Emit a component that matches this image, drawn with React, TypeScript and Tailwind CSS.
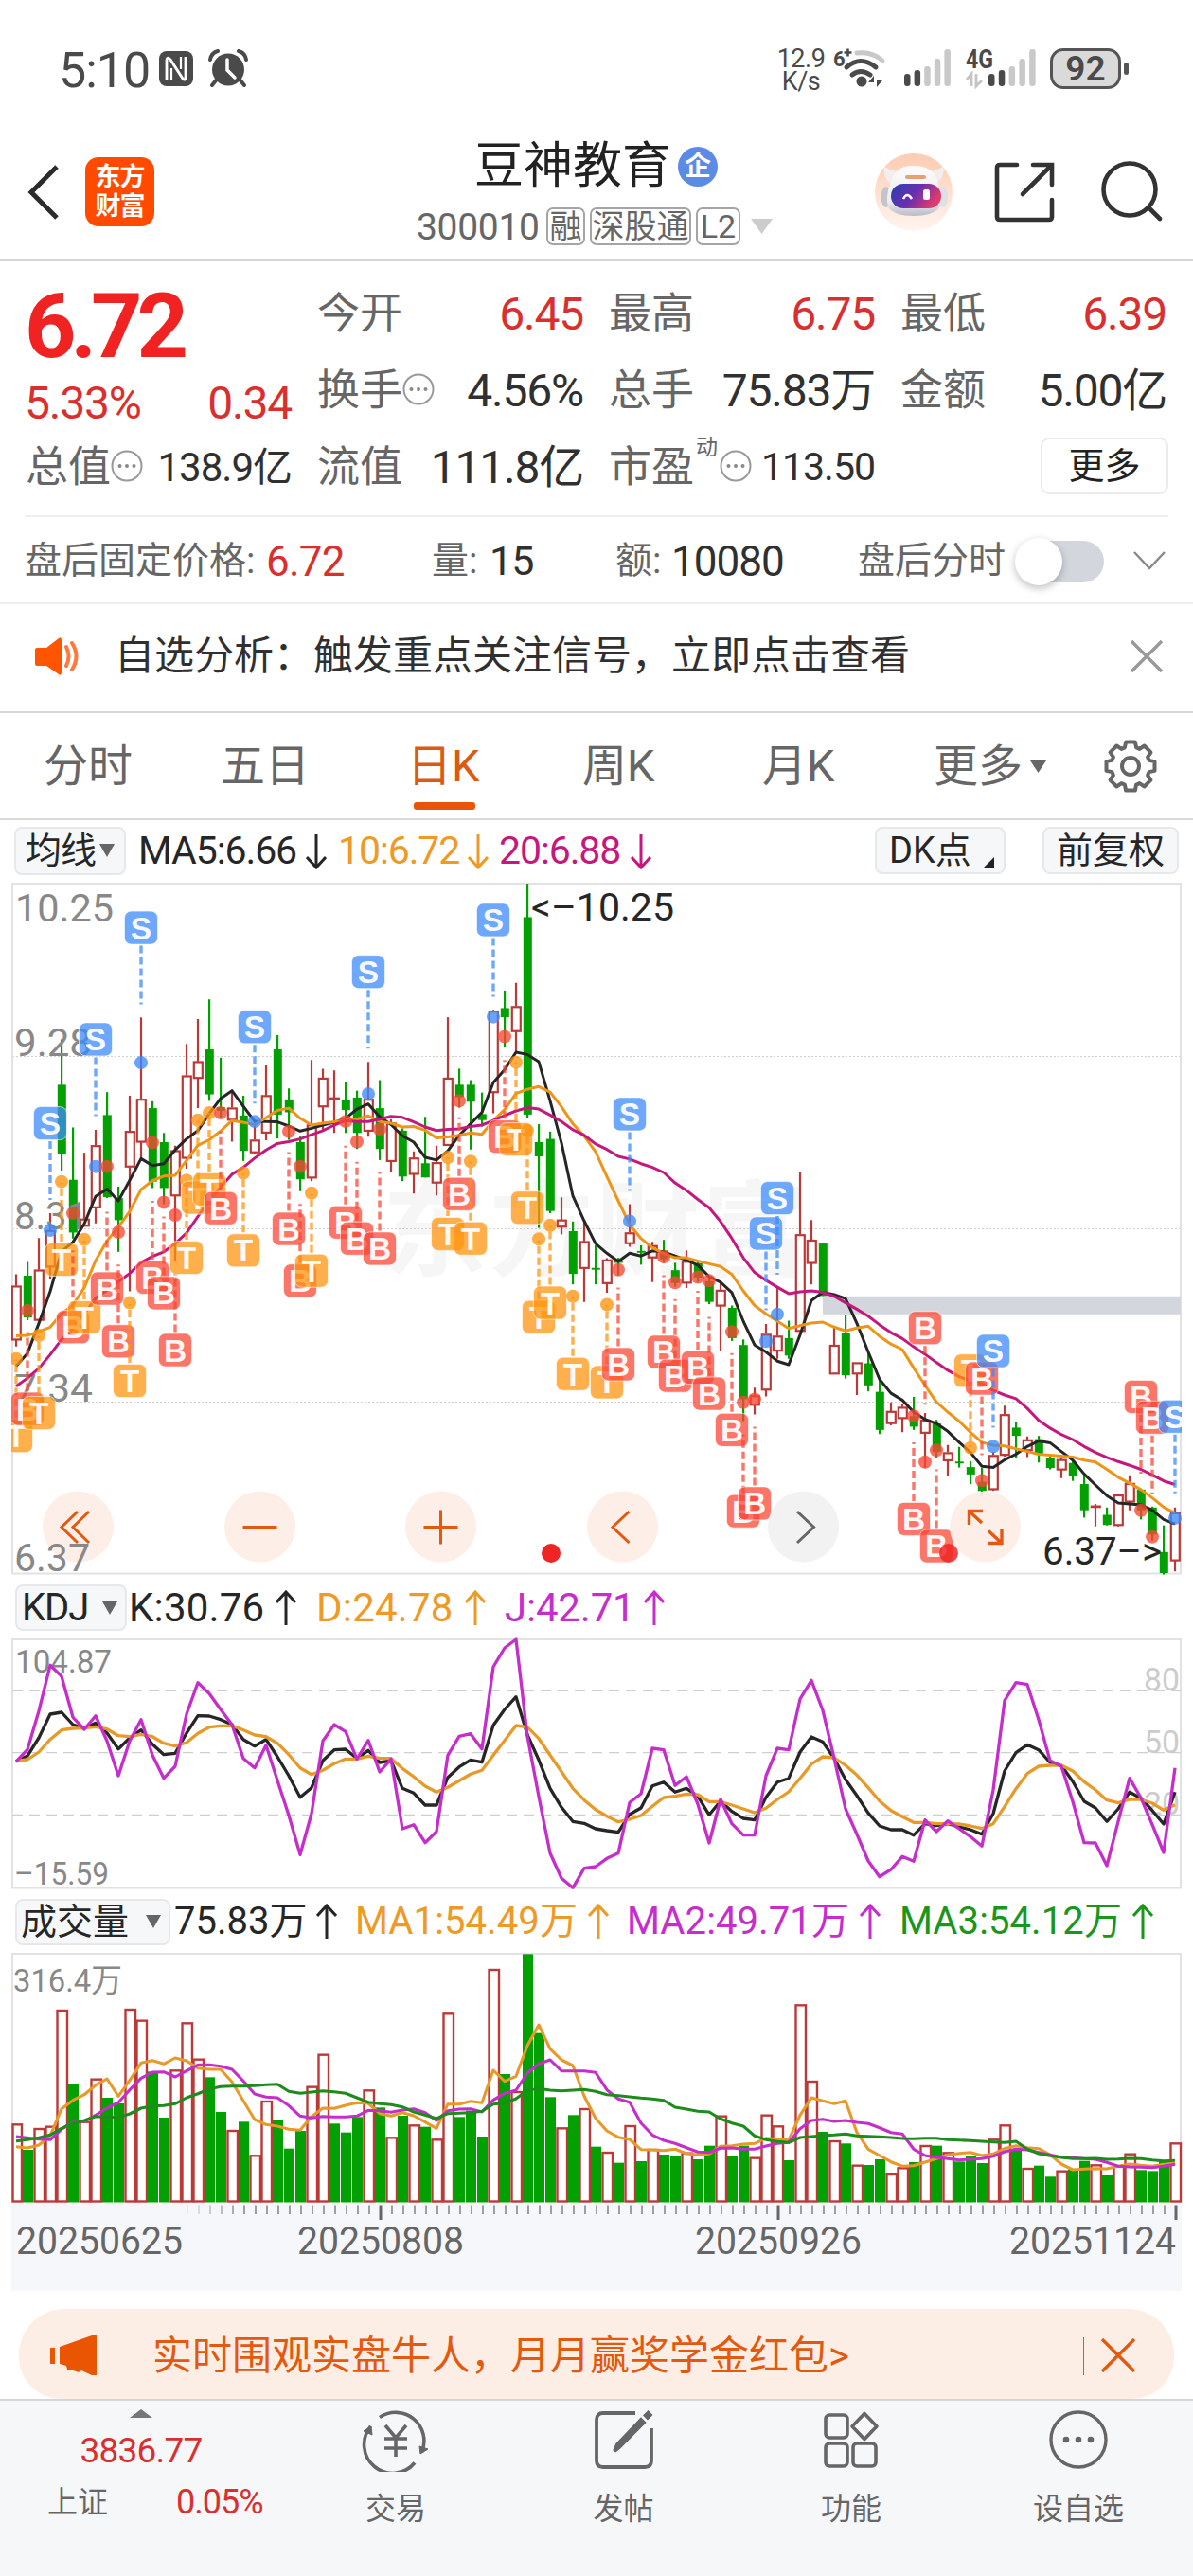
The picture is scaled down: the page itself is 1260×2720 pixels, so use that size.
import React from "react";

const FONT = "font-[Roboto,'Noto_Sans_CJK_SC',sans-serif]";

/* Price panel values: vertical position inside the panel, 2.0632 units per pixel, from y = 920. */
type Candle = [string, number, number, number, number];
const candles: Candle[] = [
  ["R", 878, 903, 1021, 1035], ["G", 851, 881, 972, 978], ["R", 799, 868, 978, 980], ["R", 745, 782, 862, 888],
  ["G", 366, 465, 616, 652], ["G", 558, 672, 787, 800], ["R", 613, 757, 773, 773], ["R", 563, 597, 733, 767],
  ["G", 481, 531, 710, 712], ["G", 687, 712, 760, 829], ["R", 489, 566, 644, 915], ["R", 318, 496, 590, 628],
  ["G", 501, 516, 676, 690], ["G", 570, 590, 690, 725], ["R", 598, 608, 707, 850], ["R", 376, 445, 625, 648],
  ["R", 322, 414, 451, 516], ["G", 279, 388, 486, 500], ["G", 406, 514, 522, 536], ["R", 480, 515, 542, 589],
  ["G", 489, 532, 609, 631], ["R", 545, 585, 613, 615], ["R", 423, 488, 570, 586], ["G", 357, 388, 530, 582],
  ["G", 473, 497, 525, 585], ["G", 578, 590, 671, 697], ["R", 411, 552, 668, 675], ["R", 430, 450, 513, 565],
  ["R", 434, 493, 495, 570], ["G", 458, 497, 520, 570], ["G", 478, 493, 570, 605], ["R", 415, 496, 566, 578],
  ["G", 455, 516, 605, 629], ["R", 540, 548, 632, 655], ["G", 560, 565, 665, 675], ["R", 610, 624, 660, 702],
  ["G", 535, 636, 667, 667], ["R", 598, 634, 679, 706], ["R", 318, 450, 597, 597], ["G", 430, 465, 492, 515],
  ["G", 455, 465, 502, 606], ["G", 482, 529, 542, 556], ["R", 302, 304, 482, 527], ["G", 260, 298, 318, 384],
  ["R", 243, 294, 349, 392], ["G", 27, 100, 530, 538], ["G", 551, 590, 621, 777], ["G", 567, 583, 740, 745],
  ["R", 710, 759, 775, 791], ["G", 763, 784, 877, 900], ["R", 765, 806, 865, 938], ["G", 815, 864, 868, 900],
  ["R", 843, 846, 898, 918], ["G", 842, 849, 853, 880], ["R", 725, 787, 811, 818], ["G", 815, 827, 831, 857],
  ["R", 807, 815, 842, 895], ["G", 803, 826, 845, 853], ["G", 853, 869, 897, 905], ["R", 826, 849, 897, 908],
  ["G", 850, 854, 885, 895], ["G", 880, 893, 938, 943], ["R", 893, 912, 947, 1044], ["G", 946, 951, 1017, 1023],
  ["G", 1020, 1032, 1150, 1198], ["R", 1125, 1142, 1163, 1183], ["R", 986, 1008, 1130, 1144], ["R", 907, 1012, 1045, 1062],
  ["G", 979, 1017, 1055, 1062], ["R", 656, 791, 1002, 1002], ["R", 760, 803, 854, 900], ["G", 811, 811, 925, 925],
  ["R", 990, 1032, 1095, 1095], ["G", 966, 1005, 1098, 1105], ["R", 1070, 1070, 1095, 1141], ["G", 1050, 1072, 1120, 1133],
  ["G", 1105, 1134, 1217, 1226], ["R", 1157, 1176, 1203, 1207], ["R", 1160, 1167, 1192, 1222], ["G", 1145, 1187, 1210, 1217],
  ["R", 1180, 1195, 1224, 1300], ["G", 1195, 1203, 1265, 1277], ["R", 1250, 1266, 1284, 1318], ["G", 1254, 1286, 1290, 1299],
  ["G", 1285, 1298, 1314, 1335], ["G", 1300, 1330, 1350, 1361], ["R", 1265, 1272, 1347, 1350], ["R", 1164, 1183, 1272, 1275],
  ["G", 1200, 1212, 1230, 1277], ["R", 1231, 1238, 1262, 1276], ["G", 1230, 1237, 1271, 1288], ["G", 1270, 1277, 1300, 1303],
  ["R", 1275, 1281, 1304, 1322], ["G", 1284, 1289, 1318, 1328], ["G", 1318, 1335, 1392, 1408], ["R", 1378, 1382, 1384, 1427],
  ["G", 1386, 1402, 1424, 1425], ["R", 1356, 1358, 1425, 1427], ["R", 1316, 1333, 1374, 1392], ["G", 1345, 1347, 1392, 1412],
  ["G", 1384, 1386, 1445, 1458], ["G", 1425, 1483, 1529, 1532], ["R", 1386, 1397, 1502, 1525],
];

const ma5 = [1078,1050,985,915,828,808,768,708,692,718,673,626,641,637,607,583,565,528,495,478,512,545,545,546,555,566,560,553,547,538,518,507,535,552,576,590,623,629,609,575,550,525,460,432,394,399,415,500,592,707,762,811,832,850,832,838,827,829,838,847,858,883,895,918,980,1032,1047,1067,1075,1010,935,917,922,931,985,1047,1107,1137,1152,1178,1194,1203,1220,1244,1266,1296,1299,1282,1270,1253,1241,1245,1264,1283,1313,1337,1360,1376,1378,1380,1392,1412,1422];
const ma10 = [1012,1011,1003,993,964,945,907,848,805,775,741,693,674,664,662,630,597,585,566,543,547,552,537,521,516,538,553,549,546,542,540,533,545,549,557,556,564,581,579,575,570,573,543,519,484,475,469,481,513,550,577,611,665,718,770,800,820,833,842,842,849,855,861,878,914,946,964,980,996,990,984,982,993,1001,995,991,1013,1030,1042,1082,1120,1156,1178,1198,1222,1244,1250,1252,1258,1264,1270,1272,1274,1276,1283,1287,1303,1320,1333,1347,1365,1385,1398];
const ma20 = [1122,1104,1083,1053,1020,998,965,930,912,894,876,852,839,829,811,788,752,717,688,660,645,625,607,593,589,583,574,565,553,543,545,545,540,534,536,546,557,565,562,561,556,553,543,532,522,515,518,531,545,563,575,594,606,621,627,637,645,656,679,695,715,733,763,800,842,874,891,906,920,916,914,917,926,940,954,969,988,1005,1018,1036,1052,1070,1087,1101,1110,1117,1131,1141,1149,1170,1196,1213,1227,1238,1253,1266,1277,1286,1294,1303,1315,1328,1336];

/* Trade signals: kind, candle index, dot position, badge position. */
type Signal = ["S" | "B" | "T", number, number, number];
const signals: Signal[] = [
  ["T", 0, 1062, 1230], ["B", 1, 957, 1171], ["T", 2, 1011, 1180], ["S", 3, 782, 549], ["T", 4, 676, 846],
  ["B", 5, 745, 993], ["T", 6, 802, 972], ["S", 7, 643, 366], ["B", 8, 643, 909], ["B", 9, 786, 1024],
  ["T", 10, 940, 1110], ["S", 11, 417, 123], ["B", 12, 591, 885], ["B", 13, 721, 919], ["B", 14, 749, 1043],
  ["T", 15, 673, 842], ["T", 16, 542, 711], ["T", 17, 526, 693], ["B", 18, 526, 734], ["T", 20, 657, 826],
  ["S", 21, 545, 339], ["B", 24, 567, 779], ["B", 25, 643, 892], ["T", 26, 701, 870], ["B", 29, 545, 765],
  ["B", 30, 589, 800], ["S", 31, 485, 219], ["B", 32, 562, 822], ["T", 38, 623, 790], ["B", 39, 500, 703],
  ["T", 40, 632, 800], ["S", 42, 317, 106], ["B", 43, 360, 578], ["T", 44, 416, 584], ["T", 45, 565, 733],
  ["T", 46, 801, 971], ["T", 47, 771, 940], ["T", 49, 926, 1095], ["T", 52, 944, 1113], ["B", 53, 868, 1074],
  ["S", 54, 762, 529], ["B", 57, 840, 1047], ["B", 58, 896, 1099], ["B", 60, 884, 1081], ["B", 61, 892, 1138],
  ["B", 63, 1003, 1217], ["B", 64, 1157, 1394], ["B", 65, 1150, 1377], ["S", 66, 1024, 789], ["S", 67, 965, 712],
  ["B", 79, 1187, 1411], ["B", 80, 1287, 995], ["B", 81, 1261, 1470], ["T", 84, 1256, 1088], ["B", 85, 1327, 1105],
  ["S", 86, 1253, 1045], ["B", 99, 1392, 1145], ["B", 100, 1450, 1190], ["S", 102, 1409, 1188],
];

/* Oscillator and volume values: 3 units per pixel. */
const kLine = [600,582,525,450,444,483,495,478,510,560,525,500,545,578,574,510,455,456,467,483,530,551,530,585,645,713,683,597,563,561,590,565,603,597,685,700,738,738,650,617,595,602,485,435,395,515,595,685,745,790,796,813,819,824,767,747,677,665,697,685,710,769,725,758,780,785,713,665,653,570,522,538,590,657,708,763,804,816,816,833,797,803,797,807,816,830,765,630,572,547,563,603,613,663,726,747,790,750,697,716,755,798,697];
const dLine = [598,594,570,530,500,495,494,490,497,518,521,514,521,542,551,540,511,491,487,487,500,516,521,542,578,620,641,628,607,592,592,583,590,590,622,648,678,697,682,661,640,628,580,533,486,491,527,580,632,685,722,752,773,791,783,771,742,714,710,703,705,727,727,738,750,762,748,720,696,653,608,585,588,612,643,683,725,755,775,793,793,797,797,798,804,812,797,743,686,638,615,612,612,630,664,690,722,731,720,720,732,754,737];
const jLine = [600,562,440,295,330,460,498,455,535,645,535,467,580,653,615,450,350,385,435,483,590,620,548,660,770,895,765,535,483,505,592,533,633,592,813,800,857,822,580,520,512,560,300,240,213,520,710,890,970,1000,938,933,907,890,730,702,558,563,676,648,735,858,720,797,833,833,645,558,563,402,343,438,590,750,830,915,965,942,901,916,785,822,788,813,838,868,690,407,350,356,467,597,615,727,857,858,930,790,653,715,800,888,620];
const volume = [730,810,744,737,369,600,722,587,645,663,366,401,562,708,559,409,524,580,690,750,721,829,657,714,806,750,611,509,727,755,706,622,676,772,702,733,737,778,379,706,686,768,240,570,627,190,440,643,742,700,681,800,819,851,735,846,810,825,829,821,840,797,704,829,797,836,701,736,843,352,594,753,783,790,860,858,840,888,868,849,798,797,820,847,829,852,778,733,808,870,860,895,878,872,845,859,891,862,824,874,877,846,790];
const vma1 = [800,804,795,765,680,653,635,605,585,640,590,535,527,538,519,528,551,555,555,595,655,714,730,735,745,748,705,678,679,669,661,663,695,703,692,702,722,742,665,665,656,661,558,593,577,480,414,490,525,543,640,710,750,770,777,809,810,812,808,822,826,823,799,797,792,790,773,776,779,700,645,655,664,655,755,808,828,848,862,860,849,838,826,821,818,828,823,806,797,803,806,825,855,873,871,869,870,862,855,859,862,856,853];
const vma2 = [768,772,776,778,745,722,720,700,678,660,620,583,564,563,579,560,541,541,545,555,592,633,643,645,670,703,709,704,706,706,703,685,686,691,684,680,692,717,686,681,680,690,652,631,621,567,538,525,560,560,560,565,620,649,659,725,763,780,790,803,817,818,805,804,808,808,798,790,787,743,717,713,720,717,723,727,740,755,760,808,828,834,838,842,840,838,830,816,808,810,818,826,833,835,838,840,850,862,864,865,866,862,856];
const vma3 = [782,778,772,763,742,725,717,704,706,707,696,678,671,670,664,645,632,617,610,608,608,607,604,602,625,631,627,623,626,631,645,659,664,667,674,690,700,711,695,694,692,688,665,662,648,622,616,621,623,621,619,625,635,638,642,646,649,653,675,681,688,690,712,725,735,766,778,784,787,771,768,765,763,760,766,767,769,771,774,775,773,773,778,779,781,783,785,787,783,808,822,829,834,838,838,837,840,839,837,838,842,845,844];

const RED = "#bb3a38";
const GREEN = "#02a002";
const cx = (i: number) => 17 + 12 * i;
const py = (v: number) => v / 2.0632;
const oy = (v: number) => v / 3;
const points = (values: number[], y: (v: number) => number) =>
  values.map((v, i) => `${cx(i)},${y(v).toFixed(1)}`).join(" ");

const signalColor = { S: "#3c8bfc", B: "#fa4735", T: "#ff940f" };

function Line({ values, y, color, width = 3 }: { values: number[]; y: (v: number) => number; color: string; width?: number }) {
  return <polyline points={points(values, y)} fill="none" stroke={color} strokeWidth={width} strokeLinejoin="round" />;
}

function Label({ x, y, w, size = 41, fill = "#888888", children }: { x: number; y: number; w: number; size?: number; fill?: string; children: string }) {
  return (
    <text x={x} y={y} fontSize={size} fill={fill} textLength={w} lengthAdjust="spacingAndGlyphs">
      {children}
    </text>
  );
}

function PriceChart() {
  return (
    <svg width="1260" height="740" viewBox="0 6 1260 740" className={`block ${FONT}`}>
      <defs>
        <clipPath id="plot"><rect x="12" y="12" width="1236" height="732" /></clipPath>
      </defs>
      <text x="404" y="419" fontSize="110" fontWeight="700" fill="#f6f6f7" textLength="448">东方财富</text>
      <g stroke="#cfcfcf" strokeWidth="1" strokeDasharray="2 2">
        <line x1="13" x2="1247" y1="195.5" y2="195.5" />
        <line x1="13" x2="1247" y1="377.5" y2="377.5" />
        <line x1="13" x2="1247" y1="560.5" y2="560.5" />
      </g>
      <rect x="13" y="13" width="1234" height="728.5" fill="none" stroke="#e2e2e2" strokeWidth="2" />
      <rect x="869" y="448.8" width="378" height="19" fill="#d3d7dd" />
      <g clipPath="url(#plot)">
        {candles.map(([c, hi, top, bot, lo], i) =>
          c === "G" ? (
            <g key={i} fill={GREEN}>
              <rect x={cx(i) - 1} y={py(hi)} width="2.2" height={py(lo - hi)} />
              <rect x={cx(i) - 4.2} y={py(top)} width="9" height={py(bot - top)} />
            </g>
          ) : (
            <g key={i} stroke={RED} strokeWidth="2.2" fill="none">
              <path d={`M${cx(i)} ${py(hi)}V${py(top)}M${cx(i)} ${py(bot)}V${py(lo)}`} />
              <rect x={cx(i) - 4.2} y={py(top) + 0.8} width="9" height={Math.max(py(bot - top) - 1.2, 0.5)} />
            </g>
          ),
        )}
        <Label x={16} y={53} w={104}>10.25</Label>
        <Label x={15} y={195} w={82}>9.28</Label>
        <Label x={15} y={378} w={78}>8.31</Label>
        <Label x={15} y={560} w={83}>7.34</Label>
        <Line values={ma5} y={py} color="#262626" />
        <Line values={ma10} y={py} color="#ee9518" />
        <Line values={ma20} y={py} color="#c4187e" />
        {signals.map(([kind, i, dot, badge]) => {
          const dir = badge > dot ? -1 : 1;
          const by = py(badge);
          const color = signalColor[kind];
          return (
            <g key={kind + i}>
              <line x1={cx(i)} x2={cx(i)} y1={by + dir * 19} y2={by + dir * 81} stroke={color} strokeOpacity="0.75" strokeWidth="3.4" strokeDasharray="8 4" />
              <circle cx={cx(i)} cy={py(dot)} r="7" fill={color} fillOpacity="0.78" />
              <rect x={cx(i) - 17.5} y={by - 17.5} width="35" height="35" rx="7" fill={color} fillOpacity="0.75" stroke="#fff" strokeOpacity="0.6" strokeWidth="1" />
              <text x={cx(i)} y={by + 12} fontSize="33.5" fontWeight="700" fill="#fff" fillOpacity="0.95" textAnchor="middle" className="font-['Liberation_Sans',sans-serif]">{kind}</text>
            </g>
          );
        })}
      </g>
      <circle cx="582" cy="720" r="10" fill="#f02424" />
      <circle cx="1002" cy="720" r="10" fill="#f02424" fillOpacity="0.85" />
      <g fill="#fdeee6" fillOpacity="0.92">
        <circle cx="82.5" cy="692" r="37.5" />
        <circle cx="274.5" cy="692" r="37.5" />
        <circle cx="465.5" cy="692" r="37.5" />
        <circle cx="657.5" cy="692" r="37.5" />
        <circle cx="848.5" cy="692" r="37.5" fill="#f1f1f1" />
        <circle cx="1040.5" cy="692" r="37.5" />
      </g>
      <g stroke="#e05a12" strokeWidth="3" fill="none">
        <path d="M82 676L65 692.500L82 709M94 676L77 692.500L94 709" />
        <path d="M256.500 692.500H292.500" />
        <path d="M447.500 692.500H483.500M465.500 674.500V710.500" />
        <path d="M664.500 676L647 692.500L664.500 709" />
        <path d="M842 676L859.500 692.500L842 709" stroke="#666" />
        <path d="M1023.500 690V675.500H1038M1024 676L1037 688M1058 695V709.500H1043M1057.500 709L1044 696.500" strokeWidth="3.4" />
      </g>
      <Label x={15} y={739} w={80}>6.37</Label>
      <Label x={561} y={52} w={151} fill="#262626">{"<–10.25"}</Label>
      <Label x={1101} y={732} w={126} fill="#262626">{"6.37–>"}</Label>
    </svg>
  );
}

function KdjChart() {
  return (
    <svg width="1260" height="268" viewBox="0 69 1260 268" className={`block ${FONT}`}>
      <rect x="13" y="71" width="1234" height="262.500" fill="none" stroke="#e2e2e2" strokeWidth="2" />
      <g stroke="#cfcfcf" strokeWidth="1.200" strokeDasharray="11 7">
        <line x1="13" x2="1247" y1="125.300" y2="125.300" />
        <line x1="13" x2="1247" y1="190.700" y2="190.700" />
        <line x1="13" x2="1247" y1="256.400" y2="256.400" />
      </g>
      <Label x={16} y={106} w={102} size={34}>104.87</Label>
      <Label x={15} y={330} w={100} size={34}>–15.59</Label>
      <Label x={1208} y={125} w={38} size={34} fill="#cccccc">80</Label>
      <Label x={1208} y={191} w={38} size={34} fill="#cccccc">50</Label>
      <Label x={1208} y={256} w={38} size={34} fill="#cccccc">20</Label>
      <Line values={kLine} y={oy} color="#262626" width={3.3} />
      <Line values={dLine} y={oy} color="#e89a28" width={3.3} />
      <Line values={jLine} y={oy} color="#c62ecb" width={3.3} />
    </svg>
  );
}

function VolumeChart() {
  return (
    <svg width="1260" height="362" viewBox="0 61 1260 362" className={`block ${FONT}`}>
      <rect x="12" y="327" width="1236" height="92" fill="#f6f7fa" />
      <path d="M13 325V63H1247V325" fill="none" stroke="#e2e2e2" strokeWidth="2" />
      <Label x={14} y={103} w={115} size={34}>316.4万</Label>
      {volume.map((v, i) => {
        const green = (candles[i][0] === "G" && i !== 4) || i === 28;
        const top = oy(v);
        const left = i === 0 ? 13 : cx(i) - 5;
        return green ? (
          <rect key={i} x={cx(i) - 5} y={top} width="11" height={325.5 - top} fill={GREEN} />
        ) : (
          <rect key={i} x={left + 0.5} y={top} width={cx(i) + 6 - left - 0.5} height={324.500 - top} fill="#fff" stroke={RED} strokeWidth="2.400" />
        );
      })}
      <Line values={vma1} y={oy} color="#e89a28" width={3.1} />
      <Line values={vma2} y={oy} color="#c62ecb" width={3.1} />
      <Line values={vma3} y={oy} color="#1d8c1d" width={3.1} />
      {volume.map((_, i) => {
        if (i < 15) return null;
        const major = i === 32 || i === 67 || i === 102;
        return (
          <line key={i} x1={cx(i) + 1} x2={cx(i) + 1} y1="328.500" y2={major ? 344 : 338} stroke={major ? "#666" : "#888"} strokeWidth={major ? 3 : 1.600} strokeOpacity={Math.min(1, (i - 14) / 6)} />
        );
      })}
      <Label x={17} y={380} w={176} size={40} fill="#666">20250625</Label>
      <Label x={314} y={380} w={176} size={40} fill="#666">20250808</Label>
      <Label x={734} y={380} w={176} size={40} fill="#666">20250926</Label>
      <Label x={1066} y={380} w={176} size={40} fill="#666">20251124</Label>
    </svg>
  );
}

function Down({ className = "", w = 16, h = 14 }: { className?: string; w?: number; h?: number }) {
  return (
    <svg width={w} height={h} viewBox="0 0 16 14" preserveAspectRatio="none" fill="currentColor" className={`shrink-0 ${className}`}>
      <path d="M0 0H16L8 14Z" />
    </svg>
  );
}

function Arrow({ up = false, className = "" }: { up?: boolean; className?: string }) {
  return (
    <svg width="22" height="38" viewBox="0 0 22 38" fill="none" stroke="currentColor" strokeWidth="3" className={`shrink-0 ${className}`}>
      <path d={up ? "M11 37V2M1 13L11 2L21 13" : "M11 1V36M1 25L11 36L21 25"} />
    </svg>
  );
}

function Info({ className = "" }: { className?: string }) {
  return (
    <svg width="34" height="34" viewBox="0 0 34 34" className={`shrink-0 ${className}`}>
      <circle cx="17" cy="17" r="15.500" fill="none" stroke="#999" strokeWidth="2" />
      <g fill="#888"><circle cx="9.500" cy="17" r="2" /><circle cx="17" cy="17" r="2" /><circle cx="24.500" cy="17" r="2" /></g>
    </svg>
  );
}

function Cell({ label, value, red, info }: { label: string; value: string; red?: boolean; info?: boolean }) {
  return (
    <div className="flex items-center">
      <span className="ml-[-1px] text-[45px] text-[#666]">{label}</span>
      {info && <Info className="mb-1" />}
      <span className={`ml-auto text-[48px] tracking-[-1.2px] ${red ? "text-[#d9302f]" : "text-[#303030]"}`}>{value}</span>
    </div>
  );
}

function SignalBars({ step = 10.6 }: { step?: number }) {
  const heights = [13, 17, 21, 29, 39];
  return (
    <svg width="52" height="40" viewBox="0 0 52 40">
      {heights.map((h, i) => (
        <rect key={h} x={i * step} y={39 - h} width="6.500" height={h} rx="3" fill={i < 2 ? "#4a4a4a" : "#c9c9c9"} />
      ))}
    </svg>
  );
}

function StatusBar() {
  return (
    <div className="flex h-[134px] items-start pt-[50px] text-[#4a4a4a]">
      <span className="ml-[62px] mt-px w-[106px] text-[52px] leading-[48px] tracking-[-1px]">5:10</span>
      <svg width="36" height="37" viewBox="0 0 36 37" className="mt-[4px]">
        <rect width="36" height="37" rx="8" fill="#4a4a4a" />
        <path d="M8 31V10Q8 5 12 9L25 29Q28 32 28 27V6" fill="none" stroke="#fff" strokeWidth="2.800" />
        <path d="M13 18V31M23 6V19" fill="none" stroke="#fff" strokeWidth="2.200" />
      </svg>
      <svg width="42" height="40" viewBox="0 0 42 40" className="ml-[16px] mt-[2px]">
        <circle cx="21" cy="21.500" r="17" fill="#4a4a4a" />
        <path d="M2 11Q3 4 10 2M40 11Q39 4 32 2M8 33L4 38M34 33L38 38" fill="none" stroke="#4a4a4a" strokeWidth="4" strokeLinecap="round" />
        <path d="M20 11V22L28 30" fill="none" stroke="#fff" strokeWidth="3.500" strokeLinecap="round" />
      </svg>
      <div className="ml-auto w-[56px] text-center text-[27px] leading-[24px] tracking-[-0.5px]">
        <div>12.9</div>
        <div>K/s</div>
      </div>
      <svg width="60" height="44" viewBox="0 0 60 44" className="ml-[2px]">
        <text x="4" y="20" fontSize="22" fontWeight="700" fill="#4a4a4a">6</text>
        <path d="M15.500 5.500H23.500M19.500 1.500V9.500" stroke="#4a4a4a" strokeWidth="2.600" />
        <g fill="none" strokeWidth="5" strokeLinecap="round">
          <path d="M29 6Q45 4 56 14" stroke="#c9c9c9" />
          <path d="M18 21Q33 8 49 21" stroke="#4a4a4a" />
          <path d="M24 29Q33 22 43 29" stroke="#4a4a4a" />
        </g>
        <circle cx="34" cy="36" r="5.500" fill="#4a4a4a" />
        <path d="M47 41V30L41 37H47M50 30V42L56 35H50" fill="#4a4a4a" />
      </svg>
      <div className="ml-[19px] mt-[2px]"><SignalBars /></div>
      <svg width="32" height="44" viewBox="0 0 32 44" className="ml-[13px]">
        <text x="0" y="22" fontSize="27" fontWeight="700" fill="#4a4a4a" textLength="29" lengthAdjust="spacingAndGlyphs">4G</text>
        <path d="M6 41V28L1 34M11 28V41L17 35" fill="none" stroke="#c4c4c4" strokeWidth="2.800" />
      </svg>
      <div className="ml-[-8px] mt-[2px]"><SignalBars step={10.800} /></div>
      <div className="ml-[13px] mt-[1px] flex items-center">
        <div className="flex h-[43px] w-[75px] items-center justify-center rounded-[14px] border-[3.5px] border-[#555] bg-[#dadada] text-[37px] font-semibold leading-none">92</div>
        <div className="ml-[3px] h-[13px] w-[5px] rounded-full bg-[#555]" />
      </div>
      <div className="w-[68px]" />
    </div>
  );
}

function Tag({ children, w }: { children: string; w: number }) {
  return (
    <span style={{ width: w }} className="flex h-[40px] items-center justify-center whitespace-nowrap rounded-[7px] border-2 border-[#a5a5a5] text-[34px] leading-none text-[#666]">
      {children}
    </span>
  );
}

function Robot() {
  return (
    <svg width="84" height="84" viewBox="0 0 84 84">
      <defs>
        <linearGradient id="halo" x1="0" y1="0" x2="0" y2="1"><stop stopColor="#fdcbb2" /><stop offset="1" stopColor="#fff5f0" /></linearGradient>
        <linearGradient id="visor" x1="0" y1="0" x2="1" y2="0.400"><stop stopColor="#2b3fae" /><stop offset="0.550" stopColor="#6a2fb0" /><stop offset="1" stopColor="#e03a6c" /></linearGradient>
        <linearGradient id="shell" x1="0" y1="0" x2="0" y2="1"><stop stopColor="#fdfbfb" /><stop offset="0.700" stopColor="#eeedf1" /><stop offset="1" stopColor="#b9bcc6" /></linearGradient>
      </defs>
      <circle cx="42" cy="42" r="41" fill="url(#halo)" />
      <path d="M11 15Q16 18 23 20L17 32Q9 26 11 15ZM73 14Q70 18 60 20L67 32Q76 24 73 14Z" fill="#f3edee" />
      <ellipse cx="13" cy="47" rx="5.500" ry="11" fill="#c3c4cc" />
      <ellipse cx="73" cy="47" rx="5" ry="11" fill="#dfdfe6" />
      <path d="M42 14C58 14 66 21 68 34C71 42 72 50 70 57C66 64 54 67 42 67C30 67 18 64 15 57C13 50 14 42 17 34C20 21 26 14 42 14Z" fill="url(#shell)" />
      <rect x="33" y="24" width="22" height="4" rx="2" fill="#e2a274" />
      <rect x="18" y="33" width="53" height="26" rx="13" fill="url(#visor)" />
      <path d="M31 49Q35 41 40 49" fill="none" stroke="#fff" strokeWidth="2.500" />
      <rect x="52" y="39" width="7" height="11" rx="2.500" fill="#fff" />
    </svg>
  );
}

function Header() {
  return (
    <div className="flex h-[142px] items-start border-b-2 border-[#d6d6d6]">
      <svg width="34" height="58" viewBox="0 0 34 58" className="ml-[29px] mt-[40px]">
        <path d="M31 2L4 29L31 56" fill="none" stroke="#2b2b2b" strokeWidth="5" />
      </svg>
      <div className="ml-[27px] mt-[32px] flex h-[73px] w-[73px] flex-col items-center justify-center rounded-[14px] bg-[#ff4a00] text-[27px] font-bold leading-[31px] tracking-[-1px] text-white">
        <span>东方</span>
        <span>财富</span>
      </div>
      <div className="ml-[277px] flex w-[385px] flex-col">
        <div className="mt-[16px] flex h-[52px] items-center pl-[61px]">
          <span className="text-[52px] leading-none text-[#222]">豆神教育</span>
          <span className="ml-[7px] flex h-[42px] w-[42px] items-center justify-center rounded-full bg-[#5b8be6] text-[28px] font-bold leading-none text-white">企</span>
        </div>
        <div className="mt-[17px] flex h-[40px] items-center gap-[5px]">
          <span className="w-[132px] pt-[2px] text-[39px] leading-none tracking-[-0.3px] text-[#666]">300010</span>
          <Tag w={41}>融</Tag>
          <Tag w={107}>深股通</Tag>
          <Tag w={47}>L2</Tag>
          <Down w={23} h={16} className="ml-[6px] text-[#ccc]" />
        </div>
      </div>
      <div className="ml-[98px] mt-[27px]"><Robot /></div>
      <svg width="64" height="64" viewBox="0 0 64 64" className="ml-[43px] mt-[37px]" fill="none" stroke="#333" strokeWidth="4.600" strokeLinecap="round">
        <path d="M24 3H6Q3 3 3 6V58Q3 61 6 61H58Q61 61 61 58V40M41 3H61V24M60 4L30 34" />
      </svg>
      <svg width="66" height="66" viewBox="0 0 66 66" className="ml-[49px] mt-[36px]" fill="none" stroke="#333" strokeWidth="4.600">
        <circle cx="30" cy="30" r="27.500" />
        <path d="M50 49L62 61" strokeLinecap="round" />
      </svg>
    </div>
  );
}

function Quote() {
  return (
    <div className="h-[270px] px-[28px] pt-[15px]">
      <div className="grid h-[243px] grid-cols-4 grid-rows-3 gap-x-[28px] leading-none">
        <div className="row-span-2 flex flex-col">
          <span className="ml-[-2px] mt-[8px] text-[95px] font-bold leading-[92px] tracking-[-6px] text-[#f02222]">6.72</span>
          <div className="ml-[-2px] mt-[11px] flex justify-between text-[48px] tracking-[-1.2px] text-[#d9302f]">
            <span>5.33%</span>
            <span>0.34</span>
          </div>
        </div>
        <Cell label="今开" value="6.45" red />
        <Cell label="最高" value="6.75" red />
        <Cell label="最低" value="6.39" red />
        <Cell label="换手" value="4.56%" info />
        <Cell label="总手" value="75.83万" />
        <Cell label="金额" value="5.00亿" />
        <div className="flex items-center">
          <span className="ml-[-1px] text-[45px] text-[#666]">总值</span>
          <Info className="mb-1" />
          <span className="ml-auto whitespace-nowrap text-[42px] tracking-[-1px] text-[#303030]">138.9亿</span>
        </div>
        <Cell label="流值" value="111.8亿" />
        <div className="flex items-center">
          <span className="ml-[-1px] text-[45px] text-[#666]">市盈</span>
          <span className="mb-[42px] ml-[2px] text-[23px] text-[#666]">动</span>
          <Info className="mb-1 ml-[2px]" />
          <span className="ml-auto text-[41px] tracking-[-1px] text-[#303030]">113.50</span>
        </div>
        <div className="flex items-center justify-end">
          <span className="mb-[4px] mr-[-2px] flex h-[60px] w-[135px] items-center justify-center rounded-[9px] border-2 border-[#ebebeb] text-[38px] text-[#222]">更多</span>
        </div>
      </div>
      <div className="mx-[-2px] mt-[10px] h-[2px] bg-[#efefef]" />
    </div>
  );
}

function AfterHours() {
  return (
    <div className="flex h-[92px] items-center border-b-2 border-[#ededed] pl-[26px] pt-[3px] text-[39px] leading-none text-[#666]">
      <span className="w-[255px]">盘后固定价格:</span>
      <span className="w-[175px] text-[44px] tracking-[-0.8px] text-[#d9302f]">6.72</span>
      <span className="w-[61px]">量:</span>
      <span className="w-[133px] text-[43px] tracking-[-1px] text-[#303030]">15</span>
      <span className="w-[59px]">额:</span>
      <span className="w-[197px] text-[44px] tracking-[-1px] text-[#303030]">10080</span>
      <span className="w-[166px]">盘后分时</span>
      <div className="flex h-[44px] w-[94px] items-center rounded-full bg-[linear-gradient(to_right,transparent_20px,#d3d7dd_20px)]">
        <div className="h-[50px] w-[50px] rounded-full bg-white shadow-[0_3px_8px_rgba(0,0,0,0.25)]" />
      </div>
      <svg width="34" height="22" viewBox="0 0 34 22" className="mb-[2px] ml-[31px]"><path d="M1 2L17 19L33 2" fill="none" stroke="#888" strokeWidth="2.400" /></svg>
    </div>
  );
}

function Notice() {
  return (
    <div className="flex h-[115px] items-center border-b-2 border-[#d9d9d9] pb-[3px]">
      <svg width="50" height="42" viewBox="0 0 50 42" className="ml-[36px]">
        <path d="M1 14Q1 12 3 12H13L26 2Q29 0 29 4V38Q29 42 26 40L13 31H3Q1 31 1 29Z" fill="#ff5500" />
        <path d="M34 11Q39 21 34 31M40 7Q49 21 40 35" fill="none" stroke="#ff7a3c" strokeWidth="4" strokeLinecap="round" />
      </svg>
      <span className="ml-[35px] whitespace-nowrap text-[42px] leading-none text-[#303030]">自选分析：触发重点关注信号，立即点击查看</span>
      <svg width="34" height="34" viewBox="0 0 34 34" className="ml-auto mr-[32px]"><path d="M1 1L33 33M33 1L1 33" stroke="#999" strokeWidth="3.400" /></svg>
    </div>
  );
}

function Gear() {
  const pts: string[] = [];
  for (let i = 0; i < 8; i++) {
    const base = (i * Math.PI) / 4 - Math.PI / 2;
    [[-0.300, 20.500], [-0.190, 26], [0.190, 26], [0.300, 20.500]].forEach(([a, r]) => {
      pts.push(`${(29 + r * Math.cos(base + a)).toFixed(1)},${(29 + r * Math.sin(base + a)).toFixed(1)}`);
    });
  }
  return (
    <svg width="58" height="58" viewBox="0 0 58 58" fill="none" stroke="#666" strokeWidth="4" strokeLinejoin="round">
      <polygon points={pts.join(" ")} />
      <circle cx="29" cy="29" r="9" />
    </svg>
  );
}

function Tabs() {
  return (
    <div className="flex h-[113px] items-start border-b-2 border-[#d9d9d9] pt-[32px] text-[47px] leading-none text-[#666]">
      <span className="ml-[46px] w-[187px]">分时</span>
      <span className="w-[197px]">五日</span>
      <div className="w-[185px] text-[#dd5a12]">
        <div>日K</div>
        <div className="ml-[7px] mt-[15px] h-[8px] w-[65px] rounded-[3px] bg-[#e8550a]" />
      </div>
      <span className="w-[190px]">周K</span>
      <span className="w-[181px]">月K</span>
      <span className="w-[102px]">更多</span>
      <Down w={17} h={13} className="mt-[18px]" />
      <div className="ml-[60px] mt-[-5px]"><Gear /></div>
    </div>
  );
}

const chip = "flex shrink-0 items-center rounded-[8px] border-2 border-[#e6e8eb] bg-[#f6f7f9] text-[#262626]";

export default function App() {
  return (
    <div className={`flex h-[2720px] w-[1260px] flex-col overflow-hidden bg-white font-normal ${FONT}`}>
      <StatusBar />
      <Header />
      <Quote />
      <AfterHours />
      <Notice />
      <Tabs />

      <div className="flex h-[60px] items-center whitespace-nowrap pl-[15px] pt-[4px] text-[41px] leading-none tracking-[-1.1px] text-[#262626]">
        <div className={`${chip} h-[51px] w-[118px] pl-[10px] text-[38px]`}>均线<Down className="ml-[4px] text-[#666]" /></div>
        <span className="ml-[13px] w-[177px]">MA5:6.66</span>
        <Arrow className="mt-[2px]" />
        <span className="ml-[12px] w-[137px] text-[#ee9a26]">10:6.72</span>
        <Arrow className="mt-[2px] text-[#ee9a26]" />
        <span className="ml-[11px] w-[139px] text-[#c4187e]">20:6.88</span>
        <Arrow className="mt-[2px] text-[#c4187e]" />
        <div className={`${chip} ml-auto h-[50px] w-[138px] pl-[13px] text-[38px] tracking-normal`}>
          DK点
          <svg width="12" height="12" viewBox="0 0 12 12" className="ml-[12px] mt-[26px]"><path d="M12 0V12H0Z" fill="#222" /></svg>
        </div>
        <div className={`${chip} ml-[39px] mr-[15px] h-[50px] w-[144px] justify-center text-[38px] tracking-normal`}>前复权</div>
      </div>
      <PriceChart />

      <div className="flex h-[63px] items-center whitespace-nowrap pl-[16px] text-[42px] leading-none tracking-[0.2px] text-[#262626]">
        <div className={`${chip} h-[49px] w-[118px] pl-[5px] text-[40px] tracking-[-1px]`}>KDJ<Down className="ml-auto mr-[8px] text-[#666]" /></div>
        <span className="ml-[2px] w-[155px]">K:30.76</span>
        <Arrow up />
        <span className="ml-[21px] w-[157px] text-[#ee9a26]">D:24.78</span>
        <Arrow up className="text-[#ee9a26]" />
        <span className="ml-[20px] w-[147px] tracking-[-0.2px] text-[#c62ecb]">J:42.71</span>
        <Arrow up className="text-[#c62ecb]" />
      </div>
      <KdjChart />

      <div className="flex h-[64px] items-center whitespace-nowrap pl-[16px] text-[40px] leading-none text-[#262626]">
        <div className={`${chip} h-[49px] w-[164px] pl-[4px] text-[38px]`}>成交量<Down className="ml-auto mr-[8px] text-[#666]" /></div>
        <span className="ml-[4px] w-[150px]">75.83万</span>
        <Arrow up />
        <span className="ml-[19px] w-[246px] tracking-[0.1px] text-[#ee9a26]">MA1:54.49万</span>
        <Arrow up className="text-[#ee9a26]" />
        <span className="ml-[19px] w-[246px] tracking-[0.1px] text-[#c62ecb]">MA2:49.71万</span>
        <Arrow up className="text-[#c62ecb]" />
        <span className="ml-[20px] w-[246px] tracking-[0.1px] text-[#1a961a]">MA3:54.12万</span>
        <Arrow up className="text-[#1a961a]" />
      </div>
      <VolumeChart />

      <div className="mx-[20px] mt-[15px] flex h-[95px] shrink-0 items-center rounded-t-[48px] rounded-b-[44px] bg-[#fdeee5] text-[#e2590f]">
        <svg width="50" height="44" viewBox="0 0 50 44" className="ml-[33px] mt-[3px]" fill="#ea5504">
          <path d="M0 14H5V31H0ZM10 13L44 1H49V43H44L33 38Q31 41 27 39L24 38L18 37L17 33L10 31Z" />
        </svg>
        <span className="ml-[58px] mt-[4px] whitespace-nowrap text-[42px] leading-none">实时围观实盘牛人，月月赢奖学金红包&gt;</span>
        <div className="ml-auto mt-[4px] h-[40px] w-px bg-[#e2590f]" />
        <svg width="36" height="36" viewBox="0 0 36 36" className="ml-[18px] mr-[41px] mt-[3px]"><path d="M1 1L35 35M35 1L1 35" stroke="#e2590f" strokeWidth="3.400" /></svg>
      </div>

      <div className="flex h-[187px] shrink-0 border-t-2 border-[#d3d5d7] bg-[#f6f7f9] text-[32px] leading-none text-[#666]">
        <div className="flex w-[298px] flex-col items-center">
          <svg width="24" height="9" viewBox="0 0 24 9" className="mt-[9px]"><path d="M0 9L12 0L24 9Z" fill="#777" /></svg>
          <span className="mt-[16px] text-[37px] tracking-[-0.8px] text-[#d9302f]">3836.77</span>
          <div className="mt-[18px] flex w-full items-center pl-[50px]">
            <span>上证</span>
            <span className="ml-[72px] text-[36px] tracking-[-1px] text-[#d9302f]">0.05%</span>
          </div>
        </div>
        <div className="flex w-[240px] flex-col items-center">
          <svg width="72" height="66" viewBox="0 0 72 66" className="mt-[9px]" fill="none" stroke="#666" strokeWidth="3.600">
            <path d="M19 8.500A30 30 0 0 1 63.500 45M56 56.500A30 30 0 0 1 9.500 18" />
            <path d="M70 42L62 47L61 39ZM2 23L10 18L11 27Z" fill="#666" strokeWidth="1" />
            <path d="M25 17L36 30L47 17M36 30V50M24 31H48M24 41H48" />
          </svg>
          <span className="mt-[23px]">交易</span>
        </div>
        <div className="flex w-[241px] flex-col items-center">
          <svg width="62" height="66" viewBox="0 0 62 66" className="mt-[9px]" fill="none" stroke="#666" strokeWidth="3.800">
            <path d="M43 4H9Q2 4 2 11V54Q2 61 9 61H53Q60 61 60 54V20" />
            <path d="M52 14L26 40L21 44L24 37L49 11Z" fill="#666" />
            <path d="M53.500 9L59 3.500" strokeWidth="7" />
          </svg>
          <span className="mt-[23px]">发帖</span>
        </div>
        <div className="flex w-[240px] flex-col items-center">
          <svg width="60" height="66" viewBox="0 0 60 66" className="mt-[9px]" fill="none" stroke="#666" strokeWidth="3.600">
            <rect x="3" y="6" width="23" height="24" rx="4" />
            <rect x="3" y="36" width="23" height="24" rx="4" />
            <rect x="32" y="36" width="24" height="24" rx="4" />
            <path d="M44 4.500L57 18L44 31.500L31 18Z" strokeLinejoin="round" />
          </svg>
          <span className="mt-[23px]">功能</span>
        </div>
        <div className="flex w-[240px] flex-col items-center">
          <svg width="62" height="66" viewBox="0 0 62 66" className="mt-[9px]">
            <circle cx="31" cy="32" r="29" fill="none" stroke="#666" strokeWidth="3.400" />
            <g fill="#666"><circle cx="18" cy="32" r="3.300" /><circle cx="31" cy="32" r="3.300" /><circle cx="44" cy="32" r="3.300" /></g>
          </svg>
          <span className="mt-[23px]">设自选</span>
        </div>
      </div>
    </div>
  );
}
